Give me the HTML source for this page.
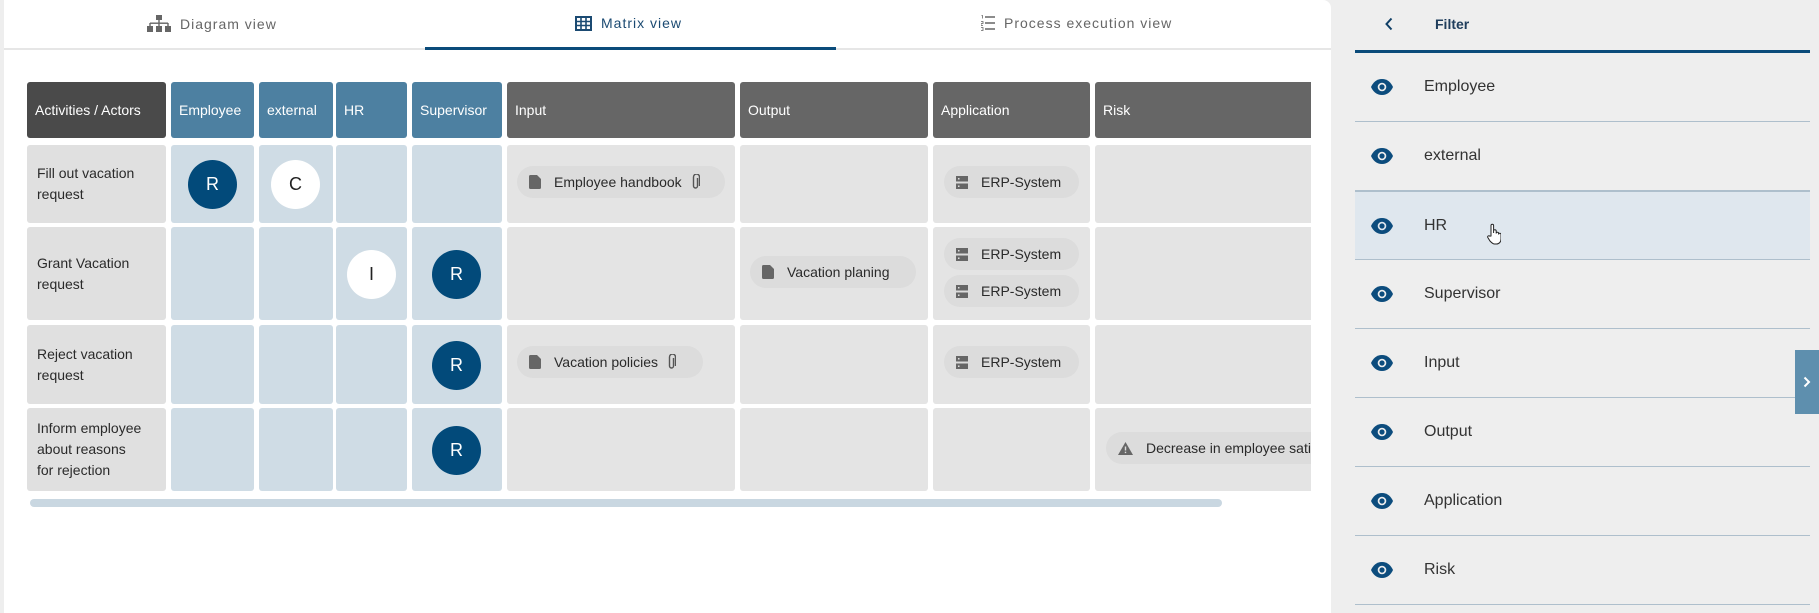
<!DOCTYPE html>
<html><head><meta charset="utf-8">
<style>
*{box-sizing:border-box;margin:0;padding:0}
body{width:1819px;height:613px;overflow:hidden;background:#eeeeee;font-family:"Liberation Sans",sans-serif;position:relative;color:#222}
.panel{position:absolute;left:4px;top:0;width:1327px;height:613px;background:#fff;border-top-right-radius:8px;overflow:hidden}
.tabs{position:absolute;left:0;top:0;width:1327px;height:50px;border-bottom:2px solid #e6e6e6}
.tab{position:absolute;top:15px;font-size:14px;letter-spacing:1px;color:#666;display:flex;align-items:center;gap:9px}
.tab.tabact{color:#1b4a72}
.uline{position:absolute;left:421px;top:47px;width:411px;height:3px;background:#0a4b7a}
.c{position:absolute;border-radius:3px}
.h{color:#fff;font-size:14px;display:flex;align-items:center;padding-left:8px;top:82px;height:56px}
.hd{background:#4a4a4a}.ha{background:#4d80a1}.ho{background:#666}
.act{background:#e0e0e0}
.ac{background:#cfdce5}
.ot{background:#e4e4e4}
.lbl{font-size:14px;line-height:21px;color:#2a2a2a;display:flex;align-items:center;padding-left:10px}
.circ{position:absolute;width:49px;height:49px;border-radius:50%;display:flex;align-items:center;justify-content:center;font-size:18px}
.dk{background:#024a7a;color:#fff}.wh{background:#fff;color:#222}
.chip{position:absolute;height:32px;border-radius:16px;background:#dcdcdc;display:flex;align-items:center;padding-left:12px;font-size:14px;color:#2a2a2a;white-space:nowrap;gap:13px}
.chip svg{flex-shrink:0}
.side{position:absolute;left:1332px;top:0;width:487px;height:613px;background:#eeeeee}
.item{position:absolute;left:23px;width:455px;height:69px;border-bottom:1.5px solid #aebfcc;display:flex;align-items:center;font-size:16px;color:#333}
.item svg{margin-left:16px;margin-right:31px;flex-shrink:0}
</style></head><body>
<div class="panel">
 <div class="tabs">
  <div class="tab" style="left:143px"><svg width="24" height="17" viewBox="0 0 24 17"><rect x="9" y="0" width="6" height="5" fill="#666"/><rect x="11.3" y="5" width="1.4" height="3" fill="#666"/><rect x="3" y="7.5" width="18" height="1.4" fill="#666"/><rect x="2.3" y="8" width="1.4" height="4" fill="#666"/><rect x="11.3" y="8" width="1.4" height="4" fill="#666"/><rect x="20.3" y="8" width="1.4" height="4" fill="#666"/><rect x="0" y="11" width="6" height="6" fill="#666"/><rect x="9" y="11" width="6" height="6" fill="#666"/><rect x="18" y="11" width="6" height="6" fill="#666"/></svg>Diagram view</div>
  <div class="tab tabact" style="left:571px"><svg width="17" height="15" viewBox="0 0 17 15"><rect x="1" y="1" width="15" height="13" fill="none" stroke="#1b4a72" stroke-width="2"/><path d="M6 1v13M11 1v13M1 5.5h15M1 9.5h15" stroke="#1b4a72" stroke-width="1.6"/></svg>Matrix view</div>
  <div class="tab" style="left:977px"><svg width="14" height="16" viewBox="0 0 14 16"><path d="M4 2h10M4 8h10M4 14h10" stroke="#666" stroke-width="1.6"/><path d="M0.5 0.5h1v3M0 6.5h2v2h-2v2h2M0 12.5h2v3h-2" stroke="#666" stroke-width="0.8" fill="none"/></svg>Process execution view</div>
  <div class="uline"></div>
 </div>
 <div style="position:absolute;left:0;top:0;width:1307px;height:613px;overflow:hidden">
 <div class="c h hd" style="left:23px;width:139px">Activities / Actors</div>
 <div class="c h ha" style="left:167px;width:83px">Employee</div>
 <div class="c h ha" style="left:255px;width:74px">external</div>
 <div class="c h ha" style="left:332px;width:71px">HR</div>
 <div class="c h ha" style="left:408px;width:90px">Supervisor</div>
 <div class="c h ho" style="left:503px;width:228px">Input</div>
 <div class="c h ho" style="left:736px;width:188px">Output</div>
 <div class="c h ho" style="left:929px;width:157px">Application</div>
 <div class="c h ho" style="left:1091px;width:240px">Risk</div>

 <div class="c act lbl" style="left:23px;top:145px;width:139px;height:78px">Fill out vacation<br>request</div>
 <div class="c act lbl" style="left:23px;top:227px;width:139px;height:93px">Grant Vacation<br>request</div>
 <div class="c act lbl" style="left:23px;top:325px;width:139px;height:79px">Reject vacation<br>request</div>
 <div class="c act lbl" style="left:23px;top:408px;width:139px;height:83px">Inform employee<br>about reasons<br>for rejection</div>

 <div class="c ac" style="left:167px;top:145px;width:83px;height:78px"></div>
 <div class="c ac" style="left:255px;top:145px;width:74px;height:78px"></div>
 <div class="c ac" style="left:332px;top:145px;width:71px;height:78px"></div>
 <div class="c ac" style="left:408px;top:145px;width:90px;height:78px"></div>
 <div class="c ac" style="left:167px;top:227px;width:83px;height:93px"></div>
 <div class="c ac" style="left:255px;top:227px;width:74px;height:93px"></div>
 <div class="c ac" style="left:332px;top:227px;width:71px;height:93px"></div>
 <div class="c ac" style="left:408px;top:227px;width:90px;height:93px"></div>
 <div class="c ac" style="left:167px;top:325px;width:83px;height:79px"></div>
 <div class="c ac" style="left:255px;top:325px;width:74px;height:79px"></div>
 <div class="c ac" style="left:332px;top:325px;width:71px;height:79px"></div>
 <div class="c ac" style="left:408px;top:325px;width:90px;height:79px"></div>
 <div class="c ac" style="left:167px;top:408px;width:83px;height:83px"></div>
 <div class="c ac" style="left:255px;top:408px;width:74px;height:83px"></div>
 <div class="c ac" style="left:332px;top:408px;width:71px;height:83px"></div>
 <div class="c ac" style="left:408px;top:408px;width:90px;height:83px"></div>

 <div class="c ot" style="left:503px;top:145px;width:228px;height:78px"></div>
 <div class="c ot" style="left:736px;top:145px;width:188px;height:78px"></div>
 <div class="c ot" style="left:929px;top:145px;width:157px;height:78px"></div>
 <div class="c ot" style="left:1091px;top:145px;width:240px;height:78px"></div>
 <div class="c ot" style="left:503px;top:227px;width:228px;height:93px"></div>
 <div class="c ot" style="left:736px;top:227px;width:188px;height:93px"></div>
 <div class="c ot" style="left:929px;top:227px;width:157px;height:93px"></div>
 <div class="c ot" style="left:1091px;top:227px;width:240px;height:93px"></div>
 <div class="c ot" style="left:503px;top:325px;width:228px;height:79px"></div>
 <div class="c ot" style="left:736px;top:325px;width:188px;height:79px"></div>
 <div class="c ot" style="left:929px;top:325px;width:157px;height:79px"></div>
 <div class="c ot" style="left:1091px;top:325px;width:240px;height:79px"></div>
 <div class="c ot" style="left:503px;top:408px;width:228px;height:83px"></div>
 <div class="c ot" style="left:736px;top:408px;width:188px;height:83px"></div>
 <div class="c ot" style="left:929px;top:408px;width:157px;height:83px"></div>
 <div class="c ot" style="left:1091px;top:408px;width:240px;height:83px"></div>

 <div class="circ dk" style="left:184px;top:160px">R</div>
 <div class="circ wh" style="left:267px;top:160px">C</div>
 <div class="circ wh" style="left:343px;top:250px">I</div>
 <div class="circ dk" style="left:428px;top:250px">R</div>
 <div class="circ dk" style="left:428px;top:341px">R</div>
 <div class="circ dk" style="left:428px;top:426px">R</div>

 <div class="chip" style="left:513px;top:166px;width:208px"><svg width="12" height="14" viewBox="0 0 12 14"><path d="M0 1.5Q0 0 1.5 0H8L12 4V12.5Q12 14 10.5 14H1.5Q0 14 0 12.5Z" fill="#666"/></svg>Employee handbook<svg width="9" height="16" viewBox="0 0 9 16" style="margin-left:-4px"><path d="M6.5 4v8a2 2 0 0 1-4 0V3a3 3 0 0 1 6 0v9" fill="none" stroke="#555" stroke-width="1.4"/></svg></div>
 <div class="chip" style="left:746px;top:256px;width:166px"><svg width="12" height="14" viewBox="0 0 12 14"><path d="M0 1.5Q0 0 1.5 0H8L12 4V12.5Q12 14 10.5 14H1.5Q0 14 0 12.5Z" fill="#666"/></svg>Vacation planing</div>
 <div class="chip" style="left:513px;top:346px;width:186px"><svg width="12" height="14" viewBox="0 0 12 14"><path d="M0 1.5Q0 0 1.5 0H8L12 4V12.5Q12 14 10.5 14H1.5Q0 14 0 12.5Z" fill="#666"/></svg>Vacation policies<svg width="9" height="16" viewBox="0 0 9 16" style="margin-left:-4px"><path d="M6.5 4v8a2 2 0 0 1-4 0V3a3 3 0 0 1 6 0v9" fill="none" stroke="#555" stroke-width="1.4"/></svg></div>
 <div class="chip" style="left:940px;top:166px;width:135px"><svg width="12" height="13" viewBox="0 0 12 13"><rect width="12" height="5.5" fill="#666"/><rect y="7.5" width="12" height="5.5" fill="#666"/><rect x="2" y="2" width="1.5" height="1.5" fill="#ddd"/><rect x="2" y="9.5" width="1.5" height="1.5" fill="#ddd"/></svg>ERP-System</div>
 <div class="chip" style="left:940px;top:238px;width:135px"><svg width="12" height="13" viewBox="0 0 12 13"><rect width="12" height="5.5" fill="#666"/><rect y="7.5" width="12" height="5.5" fill="#666"/><rect x="2" y="2" width="1.5" height="1.5" fill="#ddd"/><rect x="2" y="9.5" width="1.5" height="1.5" fill="#ddd"/></svg>ERP-System</div>
 <div class="chip" style="left:940px;top:275px;width:135px"><svg width="12" height="13" viewBox="0 0 12 13"><rect width="12" height="5.5" fill="#666"/><rect y="7.5" width="12" height="5.5" fill="#666"/><rect x="2" y="2" width="1.5" height="1.5" fill="#ddd"/><rect x="2" y="9.5" width="1.5" height="1.5" fill="#ddd"/></svg>ERP-System</div>
 <div class="chip" style="left:940px;top:346px;width:135px"><svg width="12" height="13" viewBox="0 0 12 13"><rect width="12" height="5.5" fill="#666"/><rect y="7.5" width="12" height="5.5" fill="#666"/><rect x="2" y="2" width="1.5" height="1.5" fill="#ddd"/><rect x="2" y="9.5" width="1.5" height="1.5" fill="#ddd"/></svg>ERP-System</div>
 <div class="chip" style="left:1102px;top:432px;width:260px"><svg width="15" height="13" viewBox="0 0 15 13"><path d="M7.5 0L15 13H0Z" fill="#666"/><rect x="6.8" y="4.5" width="1.4" height="4" fill="#ddd"/><rect x="6.8" y="9.7" width="1.4" height="1.4" fill="#ddd"/></svg>Decrease in employee satisfaction</div>
 </div>
 <div style="position:absolute;left:26px;top:499px;width:1192px;height:8px;border-radius:4px;background:#c9d7e1"></div>
</div>

<div class="side">
 <svg style="position:absolute;left:53px;top:17px" width="8" height="14" viewBox="0 0 8 14"><path d="M6.5 1.5L1.5 7L6.5 12.5" fill="none" stroke="#0f3f66" stroke-width="2"/></svg>
 <div style="position:absolute;left:103px;top:16px;font-size:14px;color:#1f3d5c;font-weight:bold">Filter</div>
 <div style="position:absolute;left:23px;top:50px;width:455px;height:3px;background:#0a4b7a"></div>
 <div class="item" style="top:53px"><svg width="22" height="16" viewBox="0 0 22 16"><path d="M11 0C5.5 0 1.8 3.8 0 8c1.8 4.2 5.5 8 11 8s9.2-3.8 11-8C20.2 3.8 16.5 0 11 0z" fill="#0c4c7d"/><circle cx="11" cy="8" r="4.3" fill="#eee"/><circle cx="11" cy="8" r="2.6" fill="#0c4c7d"/></svg>Employee</div>
 <div class="item" style="top:122px"><svg width="22" height="16" viewBox="0 0 22 16"><path d="M11 0C5.5 0 1.8 3.8 0 8c1.8 4.2 5.5 8 11 8s9.2-3.8 11-8C20.2 3.8 16.5 0 11 0z" fill="#0c4c7d"/><circle cx="11" cy="8" r="4.3" fill="#eee"/><circle cx="11" cy="8" r="2.6" fill="#0c4c7d"/></svg>external</div>
 <div class="item" style="top:191px;background:#dfe7ee;border-top:1.5px solid #aebfcc"><svg width="22" height="16" viewBox="0 0 22 16"><path d="M11 0C5.5 0 1.8 3.8 0 8c1.8 4.2 5.5 8 11 8s9.2-3.8 11-8C20.2 3.8 16.5 0 11 0z" fill="#0c4c7d"/><circle cx="11" cy="8" r="4.3" fill="#dfe7ee"/><circle cx="11" cy="8" r="2.6" fill="#0c4c7d"/></svg>HR
  <svg style="margin-left:40px;margin-top:16px" width="14" height="22" viewBox="0 0 14 22"><path d="M4 13V2.5a1.3 1.3 0 0 1 2.6 0V10V8a1.3 1.3 0 0 1 2.6 0v2.5a1.2 1.2 0 0 1 2.4 0v1a1.2 1.2 0 0 1 2.4 0V16c0 3-2 5-4.5 5H7.5C5.5 21 4.5 19.5 3 18L0.8 14.5a1.2 1.2 0 0 1 2-1.3z" fill="#fff" stroke="#222" stroke-width="1"/></svg></div>
 <div class="item" style="top:260px"><svg width="22" height="16" viewBox="0 0 22 16"><path d="M11 0C5.5 0 1.8 3.8 0 8c1.8 4.2 5.5 8 11 8s9.2-3.8 11-8C20.2 3.8 16.5 0 11 0z" fill="#0c4c7d"/><circle cx="11" cy="8" r="4.3" fill="#eee"/><circle cx="11" cy="8" r="2.6" fill="#0c4c7d"/></svg>Supervisor</div>
 <div class="item" style="top:329px"><svg width="22" height="16" viewBox="0 0 22 16"><path d="M11 0C5.5 0 1.8 3.8 0 8c1.8 4.2 5.5 8 11 8s9.2-3.8 11-8C20.2 3.8 16.5 0 11 0z" fill="#0c4c7d"/><circle cx="11" cy="8" r="4.3" fill="#eee"/><circle cx="11" cy="8" r="2.6" fill="#0c4c7d"/></svg>Input</div>
 <div class="item" style="top:398px"><svg width="22" height="16" viewBox="0 0 22 16"><path d="M11 0C5.5 0 1.8 3.8 0 8c1.8 4.2 5.5 8 11 8s9.2-3.8 11-8C20.2 3.8 16.5 0 11 0z" fill="#0c4c7d"/><circle cx="11" cy="8" r="4.3" fill="#eee"/><circle cx="11" cy="8" r="2.6" fill="#0c4c7d"/></svg>Output</div>
 <div class="item" style="top:467px"><svg width="22" height="16" viewBox="0 0 22 16"><path d="M11 0C5.5 0 1.8 3.8 0 8c1.8 4.2 5.5 8 11 8s9.2-3.8 11-8C20.2 3.8 16.5 0 11 0z" fill="#0c4c7d"/><circle cx="11" cy="8" r="4.3" fill="#eee"/><circle cx="11" cy="8" r="2.6" fill="#0c4c7d"/></svg>Application</div>
 <div class="item" style="top:536px"><svg width="22" height="16" viewBox="0 0 22 16"><path d="M11 0C5.5 0 1.8 3.8 0 8c1.8 4.2 5.5 8 11 8s9.2-3.8 11-8C20.2 3.8 16.5 0 11 0z" fill="#0c4c7d"/><circle cx="11" cy="8" r="4.3" fill="#eee"/><circle cx="11" cy="8" r="2.6" fill="#0c4c7d"/></svg>Risk</div>
 <div style="position:absolute;left:463px;top:350px;width:24px;height:64px;background:#5e8fae;display:flex;align-items:center;justify-content:center"><svg width="8" height="12" viewBox="0 0 8 12"><path d="M1.5 1.5L6 6L1.5 10.5" fill="none" stroke="#fff" stroke-width="2"/></svg></div>
</div>
</body></html>
